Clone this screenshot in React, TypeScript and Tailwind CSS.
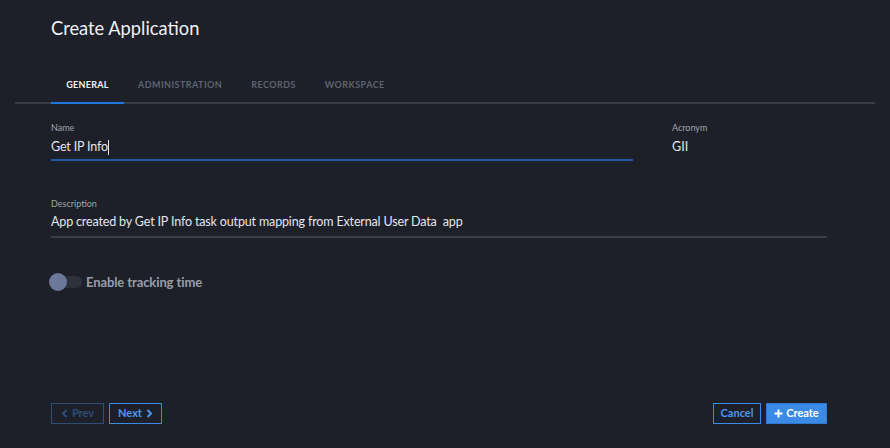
import React from "react";

export default function App() {
  return (
    <div
      className="w-[890px] h-[448px] bg-[#1d2029] flex flex-col text-[#e3e5ea]"
      style={{ fontFamily: "Lato, 'Noto Sans', sans-serif" }}
    >
      <div className="pl-[51px] pt-[16px] text-[18.3px] leading-[24px] text-[#eef0f4]">Create Application</div>

      <div className="mt-[38px] mx-[15px] border-b-2 border-[#373c48] flex pl-[36px]">
        <div className="relative w-[73px] flex justify-center pb-[10px]">
          <span className="text-[9px] font-bold tracking-[0.3px] text-[#f2f3f5]">GENERAL</span>
          <div className="absolute left-0 right-0 -bottom-[2px] h-[2px] bg-[#1f78e0]" />
        </div>
        <div className="flex gap-[29px] pl-[14px] pb-[10px] text-[9px] font-bold tracking-[0.45px] text-[#5f6470]">
          <span>ADMINISTRATION</span>
          <span>RECORDS</span>
          <span>WORKSPACE</span>
        </div>
      </div>

      <div className="flex mt-[18px] pl-[51px]">
        <div className="w-[582px]">
          <div className="text-[9px] leading-[12px] text-[#a0a4ae]">Name</div>
          <div className="mt-[5px] h-[20px] text-[12.5px] leading-[16px] tracking-[-0.15px] flex items-start">
            <span>Get IP Info</span>
            <span className="w-px h-[15px] bg-[#e3e5ea] mt-[1px]" />
          </div>
          <div className="h-[2px] bg-[#1c5aa6]" />
        </div>
        <div className="ml-[39px]">
          <div className="text-[9px] leading-[12px] text-[#a0a4ae]">Acronym</div>
          <div className="mt-[5px] text-[12.5px] leading-[16px]">GII</div>
        </div>
      </div>

      <div className="mt-[37px] pl-[51px] w-[827px]">
        <div className="text-[9px] leading-[12px] text-[#a0a4ae]">Description</div>
        <div className="mt-[4px] h-[22px] text-[12.5px] leading-[16px] tracking-[-0.15px]">
          App created by Get IP Info task output mapping from External User Data&nbsp; app
        </div>
        <div className="h-[2px] bg-[#383e4c]" />
      </div>

      <div className="mt-[35px] pl-[49px] flex items-center">
        <div className="relative w-[34px] h-[18px] flex items-center">
          <div className="ml-[4px] w-[29px] h-[12px] rounded-full bg-[#2d313c]" />
          <div className="absolute left-0 top-0 w-[18px] h-[18px] rounded-full bg-[#6b7899]" />
        </div>
        <span className="ml-[3px] text-[13px] font-bold tracking-[-0.1px] text-[#9a9ea8]">Enable tracking time</span>
      </div>

      <div className="mt-auto mb-[24px] px-[51px] pr-[63px] flex items-center">
        <button className="h-[21px] w-[53px] border border-[#2e4d78] text-[#2e4d78] text-[11px] font-bold flex items-center justify-center gap-[4px]">
          <svg width="7" height="9" viewBox="0 0 7 9"><path d="M5.5 1 L2 4.5 L5.5 8" stroke="currentColor" strokeWidth="2" fill="none" /></svg>
          Prev
        </button>
        <button className="ml-[5px] h-[21px] w-[53px] border border-[#3a8ae6] text-[#4a97ee] text-[11px] font-bold flex items-center justify-center gap-[4px]">
          Next
          <svg width="7" height="9" viewBox="0 0 7 9"><path d="M1.5 1 L5 4.5 L1.5 8" stroke="currentColor" strokeWidth="2" fill="none" /></svg>
        </button>
        <div className="flex-1" />
        <button className="h-[21px] w-[48px] border border-[#3a8ae6] text-[#4a97ee] text-[11px] font-bold flex items-center justify-center">
          Cancel
        </button>
        <button className="ml-[5px] h-[21px] w-[61px] bg-[#3a8ae6] border border-[#2f78d0] text-white text-[11px] font-bold flex items-center justify-center gap-[3px]">
          <svg width="9" height="9" viewBox="0 0 9 9"><path d="M4.5 0.5 V8.5 M0.5 4.5 H8.5" stroke="currentColor" strokeWidth="2" /></svg>
          Create
        </button>
      </div>
    </div>
  );
}
